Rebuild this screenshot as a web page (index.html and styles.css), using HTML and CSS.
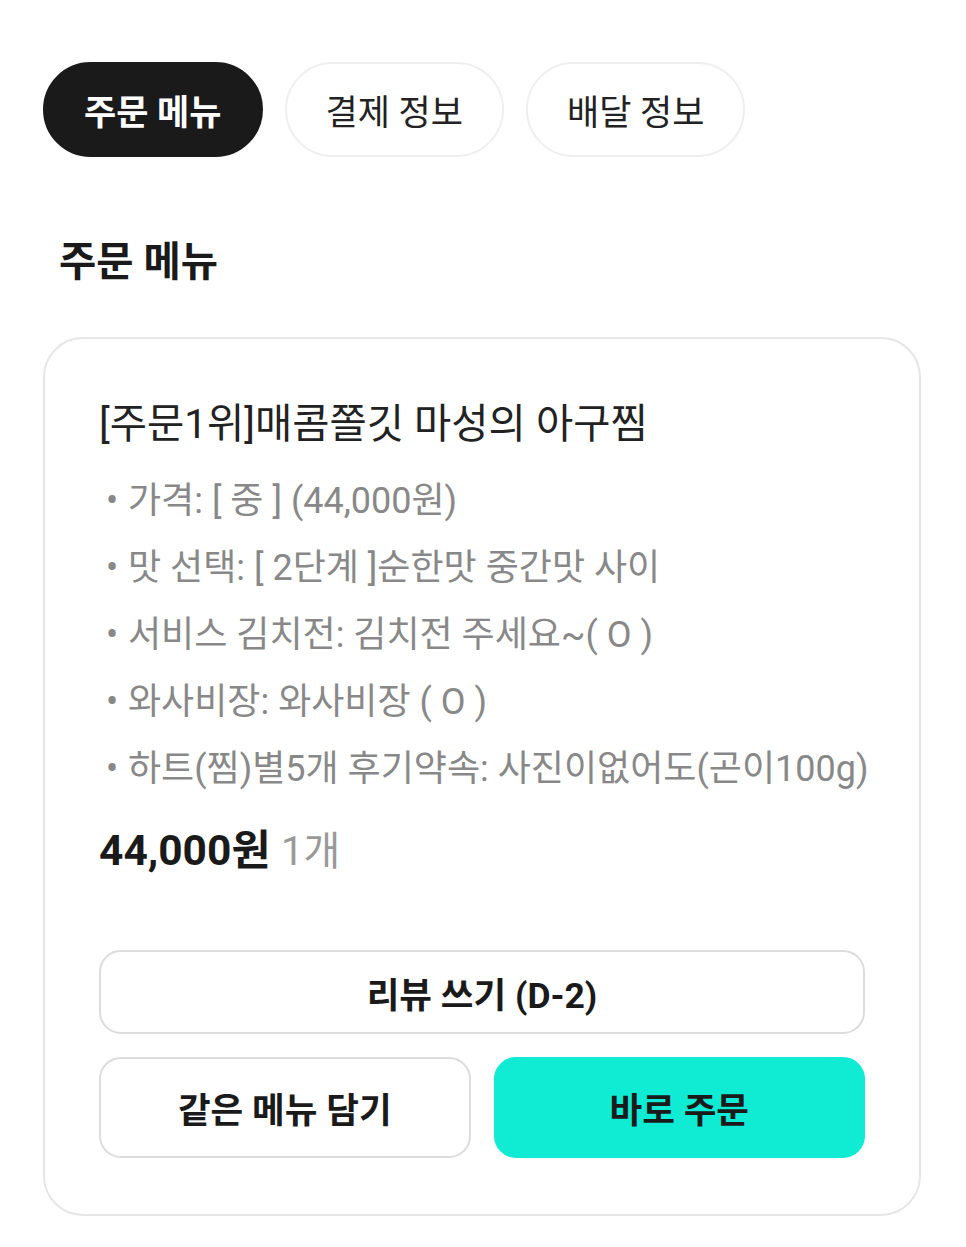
FILE: index.html
```html
<!DOCTYPE html>
<html lang="ko">
<head>
<meta charset="utf-8">
<link rel="stylesheet" href="styles.css">
</head>
<body>
<div class="page">
  <nav class="tabs">
    <div class="tab active">주문 메뉴</div>
    <div class="tab">결제 정보</div>
    <div class="tab">배달 정보</div>
  </nav>
  <h2 class="section-title">주문 메뉴</h2>
  <section class="card">
    <div class="item-title">[주문1위]매콤쫄깃 마성의 아구찜</div>
    <ul class="options">
      <li>가격: [ 중 ] (44,000원)</li>
      <li>맛 선택: [ 2단계 ]순한맛 중간맛 사이</li>
      <li>서비스 김치전: 김치전 주세요~( O )</li>
      <li>와사비장: 와사비장 ( O )</li>
      <li>하트(찜)별5개 후기약속: 사진이없어도(곤이100g)</li>
    </ul>
    <div class="price"><span class="amount">44,000원</span> <span class="qty">1개</span></div>
    <div class="btn review">리뷰 쓰기 (D-2)</div>
    <div class="btn-row">
      <div class="btn outline">같은 메뉴 담기</div>
      <div class="btn primary">바로 주문</div>
    </div>
  </section>
</div>
</body>
</html>
```

FILE: styles.css
```css
* { box-sizing: border-box; }
html, body { margin: 0; padding: 0; background: #fff; }
body {
  font-family: Roboto, "Noto Sans CJK KR", "Noto Sans", sans-serif;
  color: #1e1e1e;
}
.page { padding: 62px 44px 0 43px; }
.tabs { display: flex; gap: 22px; }
.tab {
  height: 95px;
  padding: 0 39px;
  border: 2px solid #efefef;
  border-radius: 48px;
  display: flex;
  align-items: center;
  justify-content: center;
  font-size: 35px;
  font-weight: 400;
  color: #222;
}
.tab.active {
  background: #1a1a1a;
  border-color: #1a1a1a;
  color: #fff;
  font-weight: 700;
}
.section-title {
  margin: 79px 0 0 16px;
  font-size: 40.5px;
  font-weight: 700;
  line-height: 52px;
  color: #1a1a1a;
}
.card {
  margin-top: 49px;
  width: 878px;
  border: 2px solid #e6e6e6;
  border-radius: 40px;
  padding: 60px 54px 56px 54px;
}
.item-title {
  font-size: 40.5px;
  line-height: 50px;
  color: #222;
}
.options {
  list-style: none;
  margin: 19px 0 0 0;
  padding: 0;
}
.options li {
  font-size: 36px;
  line-height: 67px;
  color: #888;
  display: flex;
  white-space: nowrap;
}
.options li::before {
  content: "•";
  display: inline-block;
  flex: none;
  width: 22px;
  padding-left: 7px;
  color: #888;
}
.price {
  margin-top: 22px;
  font-size: 42.5px;
  line-height: 52px;
}
.price .amount { font-weight: 700; color: #1a1a1a; }
.price .qty { color: #999; font-size: 40px; }
.btn {
  display: flex;
  align-items: center;
  justify-content: center;
  font-size: 35.5px;
  font-weight: 700;
  color: #1a1a1a;
  border-radius: 22px;
}
.btn.review {
  margin-top: 72px;
  height: 84px;
  border: 2px solid #dcdcdc;
}
.btn-row {
  display: grid;
  grid-template-columns: 1fr 1fr;
  gap: 23px;
  margin-top: 23px;
}
.btn.outline {
  height: 101px;
  border: 2px solid #dcdcdc;
}
.btn.primary {
  height: 101px;
  background: #10ebd4;
  border: 2px solid #10ebd4;
}
```
